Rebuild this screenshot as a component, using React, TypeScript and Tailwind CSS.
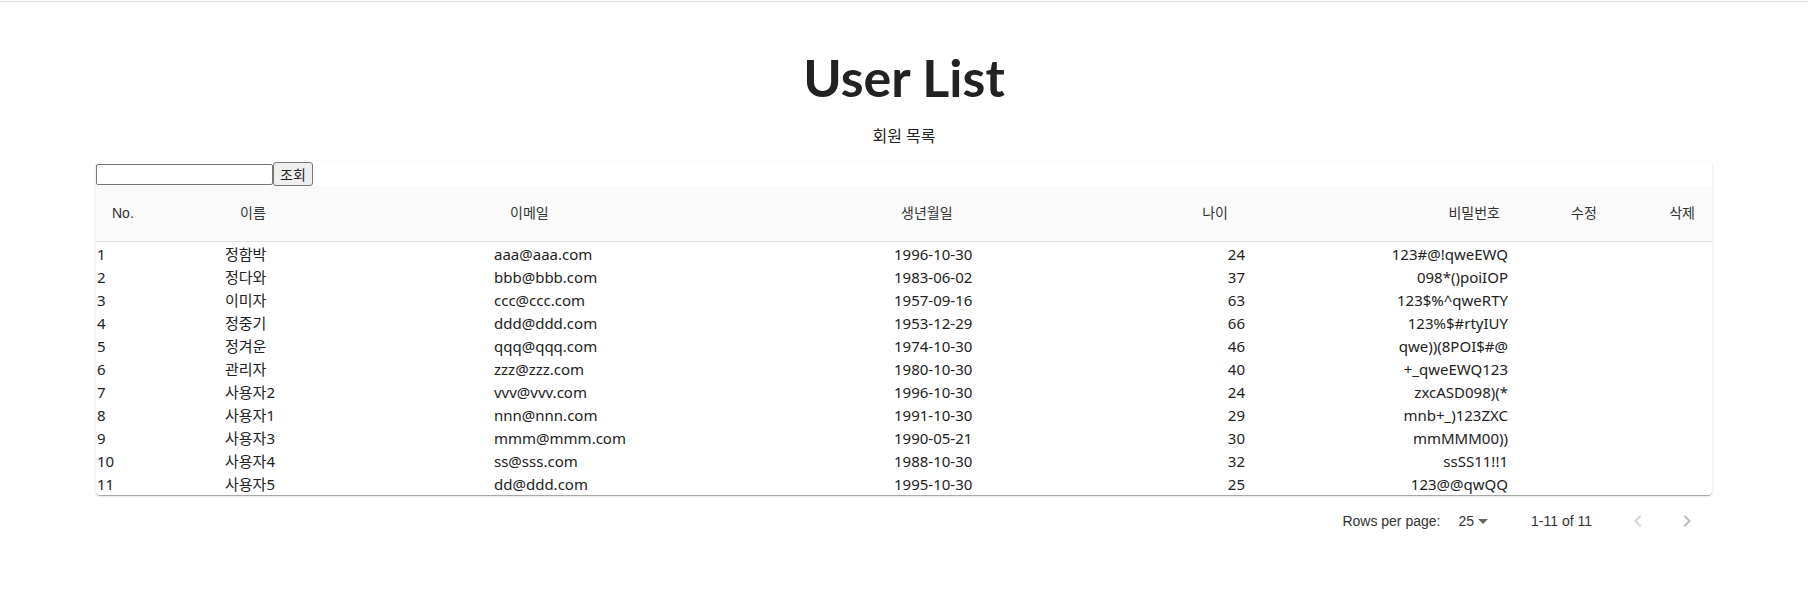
import React from "react";

type User = {
  no: number;
  name: string;
  email: string;
  birth: string;
  age: number;
  password: string;
};

const users: User[] = [
  { no: 1, name: "정함박", email: "aaa@aaa.com", birth: "1996-10-30", age: 24, password: "123#@!qweEWQ" },
  { no: 2, name: "정다와", email: "bbb@bbb.com", birth: "1983-06-02", age: 37, password: "098*()poiIOP" },
  { no: 3, name: "이미자", email: "ccc@ccc.com", birth: "1957-09-16", age: 63, password: "123$%^qweRTY" },
  { no: 4, name: "정중기", email: "ddd@ddd.com", birth: "1953-12-29", age: 66, password: "123%$#rtyIUY" },
  { no: 5, name: "정겨운", email: "qqq@qqq.com", birth: "1974-10-30", age: 46, password: "qwe))(8POI$#@" },
  { no: 6, name: "관리자", email: "zzz@zzz.com", birth: "1980-10-30", age: 40, password: "+_qweEWQ123" },
  { no: 7, name: "사용자2", email: "vvv@vvv.com", birth: "1996-10-30", age: 24, password: "zxcASD098)(*" },
  { no: 8, name: "사용자1", email: "nnn@nnn.com", birth: "1991-10-30", age: 29, password: "mnb+_)123ZXC" },
  { no: 9, name: "사용자3", email: "mmm@mmm.com", birth: "1990-05-21", age: 30, password: "mmMMM00))" },
  { no: 10, name: "사용자4", email: "ss@sss.com", birth: "1988-10-30", age: 32, password: "ssSS11!!1" },
  { no: 11, name: "사용자5", email: "dd@ddd.com", birth: "1995-10-30", age: 25, password: "123@@qwQQ" },
];

// shared column template for header and body rows
const cols = "grid grid-cols-[129px_269px_400px_206px_161px_263px_89px_99px]";

function ChevronLeft({ className }: { className?: string }) {
  return (
    <svg viewBox="0 0 24 24" width="24" height="24" className={className} fill="currentColor">
      <path d="M15.41 7.41L14 6l-6 6 6 6 1.41-1.41L10.83 12z" />
    </svg>
  );
}

function ChevronRight({ className }: { className?: string }) {
  return (
    <svg viewBox="0 0 24 24" width="24" height="24" className={className} fill="currentColor">
      <path d="M10 6L8.59 7.41 13.17 12l-4.58 4.59L10 18l6-6z" />
    </svg>
  );
}

export default function App() {
  return (
    <div className="min-h-screen bg-white text-[#212121] font-['Noto_Sans','Noto_Sans_CJK_KR',sans-serif]">
      <div className="mt-px h-px bg-[#dcdcdc]" />

      <h1 className="mt-[49px] text-center font-['Lato','Noto_Sans_CJK_KR',sans-serif] text-[52px] font-bold leading-[52px] text-[#222]">
        User List
      </h1>
      <p className="mt-[21px] text-center text-[16px] leading-[24px] text-[#222]">회원 목록</p>

      <div className="mx-[96px] mt-[13px] rounded-[4px] bg-white shadow-[0_2px_1px_-1px_rgba(0,0,0,0.2),0_1px_1px_0_rgba(0,0,0,0.14),0_1px_3px_0_rgba(0,0,0,0.12)]">
        <div className="flex items-end pt-px">
          <input
            type="text"
            className="mb-px h-[21px] w-[177px] rounded-[2px] border border-[#767676] bg-white px-[2px] text-[13px] outline-none"
          />
          <button className="h-[24px] rounded-[3px] border border-[#767676] bg-[#efefef] px-[6px] font-['Noto_Sans_CJK_KR',sans-serif] text-[14px] font-normal leading-[20px] text-[#222]">
            조회
          </button>
        </div>

        <div
          className={`${cols} h-[56px] items-center border-b border-[#e0e0e0] bg-[#fafafa] font-['Liberation_Sans','Noto_Sans_CJK_KR',sans-serif] text-[14px] text-[#333]`}
        >
          <div className="pl-[16px]">No.</div>
          <div className="pl-[15px]">이름</div>
          <div className="pl-[16px]">이메일</div>
          <div className="pl-[7px]">생년월일</div>
          <div className="pr-[33px] text-right">나이</div>
          <div className="pr-[24px] text-right">비밀번호</div>
          <div className="pl-[47px]">수정</div>
          <div className="pr-[17px] text-right">삭제</div>
        </div>

        <div className="text-[15px] text-[#222]">
          {users.map((u) => (
            <div key={u.no} className={`${cols} h-[23px] pt-[2px] leading-[21px]`}>
              <div className="pl-px">{u.no}</div>
              <div>{u.name}</div>
              <div>{u.email}</div>
              <div>{u.birth}</div>
              <div className="pr-[16px] text-right">{u.age}</div>
              <div className="pr-[16px] text-right">{u.password}</div>
              <div />
              <div />
            </div>
          ))}
        </div>
      </div>

      <div className="mx-[96px] flex h-[52px] items-center justify-end pr-[5px] font-['Liberation_Sans',sans-serif] text-[14px] text-[#333]">
        <span>Rows per page:</span>
        <div className="ml-[18px] flex items-center">
          <span>25</span>
          <svg viewBox="0 0 24 24" width="24" height="24" className="-ml-[3px] text-[#666]" fill="currentColor">
            <path d="M7 10l5 5 5-5z" />
          </svg>
        </div>
        <span className="ml-[36px]">1-11 of 11</span>
        <button className="ml-[26px] flex h-[40px] w-[40px] items-center justify-center text-[#d6d6d6]">
          <ChevronLeft />
        </button>
        <button className="ml-[9px] flex h-[40px] w-[40px] items-center justify-center text-[#bdbdbd]">
          <ChevronRight />
        </button>
      </div>
    </div>
  );
}
